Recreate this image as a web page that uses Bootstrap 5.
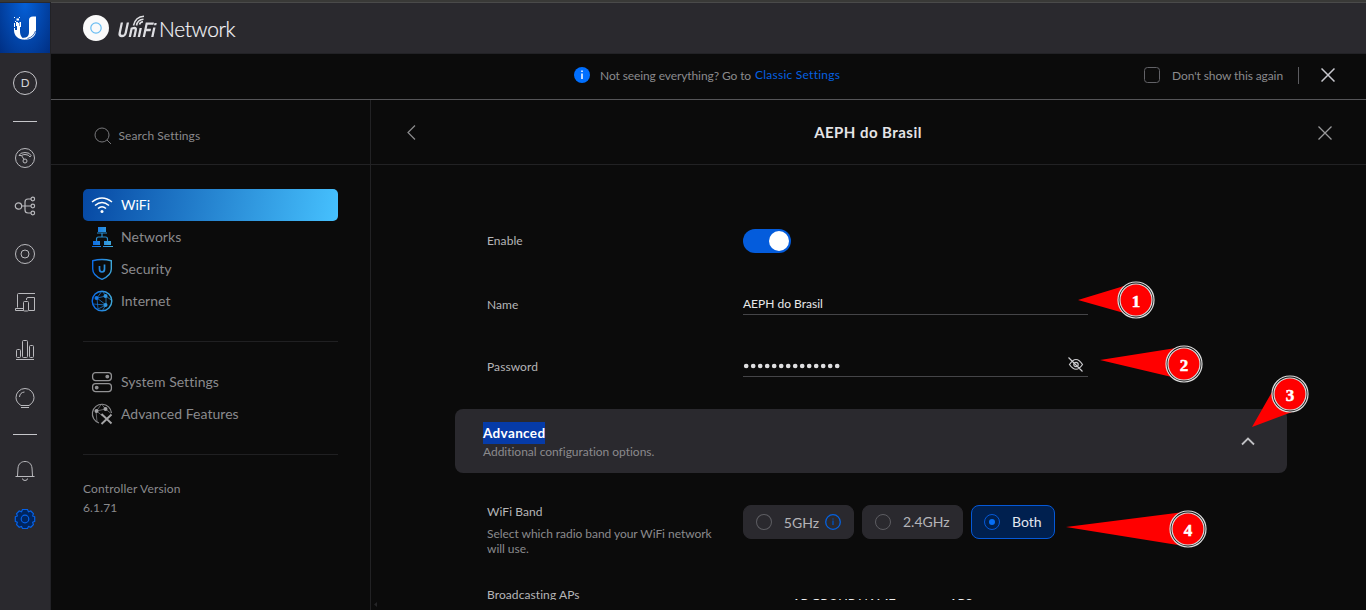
<!DOCTYPE html>
<html lang="en" data-bs-theme="dark">
<head>
<meta charset="utf-8">
<meta name="viewport" content="width=device-width, initial-scale=1">
<title>UniFi Network</title>
<link href="https://cdn.jsdelivr.net/npm/bootstrap@5.3.0/dist/css/bootstrap.min.css" rel="stylesheet">
<style>
body{font-family:Lato,"Liberation Sans",sans-serif;font-size:12px;line-height:16px;background:#0b0b0b;color:#b4b4b4;height:610px;overflow:hidden;border-top:2px solid #393937}
svg{display:block;flex:none}
.app{height:608px}
.rail{width:51px;background:#2a292e;border-right:1px solid #222226;padding-top:1px}
.brandbox{width:50px;height:50px;background:radial-gradient(ellipse at 50% 0,#0560d8,#002f83)}
.rail-icons{color:#b9b9bd}
.rail-icons a{height:48px;width:50px;color:inherit}
.avatar{width:24px;height:24px;border:1px solid #c6c6ca;font-size:11.5px;color:#d4d4d8;line-height:22px}
.dash{width:24px;height:1px;background:#c6c6ca}
.topbar{height:52px;background:#2a292e;border-top:1px solid #4a4a4a;border-bottom:1px solid #222226;padding-left:32px}
.product{font-size:21px;font-weight:300;color:#f4f4f8;line-height:26px;letter-spacing:-.35px;-webkit-text-stroke:.2px #f4f4f8}
.notice{height:46px;border-bottom:1px solid #555558;color:#8a8a8d}
.notice a{color:#0560e0}
.note,.dont{letter-spacing:-.1px}
.classic{letter-spacing:.24px}
.side{width:320px;border-right:1px solid #222224;color:#8a8a8d}
.search{height:65px;border-bottom:1px solid #222224;padding:8px 0 0 43px}
.srch{letter-spacing:.06px}
.menu{margin:0 32px;width:255px}
.menu .nav-link{height:32px;padding:0 0 0 8px;font-size:14px;letter-spacing:.04px;color:#8a8a8d;border-radius:5px;gap:8px}
.menu .nav-link.active{background:linear-gradient(100deg,#0648a3,#46c1fe);color:#fff}
.split{height:1px;background:#202022;margin:0 32px;width:255px}
.titlebar{height:65px;border-bottom:1px solid #222224}
.titlebar h1{font-size:15px;line-height:20px;font-weight:700;letter-spacing:.46px;color:#e4e4e6}
.pane{height:435px;overflow:hidden}
.cfg{padding-left:116px}
.lbl{width:256px;color:#b6b6b8;letter-spacing:.08px}
.field{width:345px;border-bottom:1px solid #454548;color:#e8e8ea}
.switch-on{width:48px;height:24px;background:#045cdc;padding:2px}
.switch-on i{width:20px;height:20px;background:#fff}
.adv{margin-left:84px;width:832px;height:64px;background:#2a292e;border-radius:8px;padding:12px 32px 0 28px}
.adv b{background:#063ba8;color:#fff;font-size:13.5px;letter-spacing:.36px;line-height:22px;display:inline-block}
.opt{height:34px;border-radius:8px;background:#2a292e;border:1px solid #2a292e;font-size:14px;color:#b4b4b8;padding:0 12px}
.opt.sel{background:#00204f;border-color:#0559d8;color:#e4e8f0}
.ring{width:16px;height:16px;border:1px solid #5d5d62}
.sel .ring{border-color:#0559d8}
.ring i{width:6px;height:6px;background:#066ef5}
.muted{color:#8a8a8d;line-height:15px;letter-spacing:-.04px}
.foot{height:10px}
.marks{left:0;top:0;pointer-events:none}
</style>
</head>
<body>
<div class="app d-flex">
  <aside class="rail flex-shrink-0">
    <div class="brandbox d-flex align-items-center justify-content-center">
      <svg width="24" height="26" viewBox="0 0 24 26" fill="#fff"><path d="M7 11v5c0 5 2 7.500 6 8.500C6 25 1 21.500 1 15v-2h1v2h2v-4h1V8h1v3z"/><path d="M16 5q0-3.500 4-3.500h3V15c0 6-4 9-9 9.500q-3 .5-5-1.500c6 0 7-3 7-6z"/><path d="M1 2h1v1H1zM3.500 3.500H6v2H3.500zM2 6h1v1H2zM6.500 7H8v5H6.500zM3 7h2v4H3zM6 2h1v1H6zM1 8h1v4H1z"/><path d="M22.500 16q-2 6-8 7.500" fill="none" stroke="#0645a5" stroke-width=".8"/></svg>
    </div>
    <nav class="rail-icons d-flex flex-column align-items-center">
      <div class="avatar rounded-circle text-center" style="margin-top:18px">D</div>
      <div class="dash" style="margin:26px 0 12px"></div>
      <a class="d-flex align-items-center justify-content-center" href="#"><svg width="22" height="22" viewBox="0 0 22 22" fill="none" stroke="currentColor"><circle cx="11" cy="11" r="9.500"/><path d="M5 8.500q1-3 6-3t6 3l-1 1.500q-1-2.500-5-2.500-2 0-3.500 1zM7.500 8.500l2.500 4"/><circle cx="11" cy="14" r="2"/></svg></a>
      <a class="d-flex align-items-center justify-content-center" href="#"><svg width="22" height="22" viewBox="0 0 22 22" fill="none" stroke="currentColor" stroke-width="1.200"><circle cx="4.500" cy="11" r="3.200"/><path d="M8 11h9M17 4h-3q-3 0-3 3v8q0 3 3 3h3"/><circle cx="18.800" cy="4" r="1.800"/><circle cx="18.800" cy="11" r="1.800"/><circle cx="18.800" cy="18" r="1.800"/></svg></a>
      <a class="d-flex align-items-center justify-content-center" href="#"><svg width="22" height="22" viewBox="0 0 22 22" fill="none" stroke="currentColor"><circle cx="11" cy="11" r="9.500"/><circle cx="11" cy="11" r="4"/></svg></a>
      <a class="d-flex align-items-center justify-content-center" href="#"><svg width="22" height="22" viewBox="0 0 22 22" fill="none" stroke="currentColor"><path d="M21 2.500H4.500q-1 0-1 1v13M1.500 17.500h8v2h-8zM12.500 9V8q0-1.500 1.500-1.500h6.500v13H15"/><path d="M9.500 19.500v-8q0-1 1-1h3q1 0 1 1v8q0 .5-1 .5h-3q-1 0-1-.5z"/></svg></a>
      <a class="d-flex align-items-center justify-content-center" href="#"><svg width="22" height="22" viewBox="0 0 22 22" fill="none" stroke="currentColor"><rect x="2.500" y="10.500" width="4" height="8" rx="1"/><rect x="8.500" y="1.500" width="5" height="17" rx="1"/><rect x="15.500" y="6.500" width="4" height="12" rx="1"/><path d="M2 20.500h18"/></svg></a>
      <a class="d-flex align-items-center justify-content-center" href="#"><svg width="22" height="22" viewBox="0 0 22 22" fill="none" stroke="currentColor"><path d="M7 18.500C4 16.500 2 14 2 10.500a9 9 0 0 1 18 0c0 3.500-2 6-5 8zM7 20.500h8M5.500 10a5.500 5.500 0 0 1 5-5"/></svg></a>
      <div class="dash" style="margin:12px 0"></div>
      <a class="d-flex align-items-center justify-content-center" href="#"><svg width="22" height="22" viewBox="0 0 22 22" fill="none" stroke="currentColor"><path d="M1.500 16.500h19M3.500 16l.5-8c.5-4.500 3.500-6.500 7-6.500s6.500 2 7 6.500l.5 8M8.500 18.500q0 2 2.500 2t2.500-2"/></svg></a>
      <a class="d-flex align-items-center justify-content-center" href="#"><svg width="22" height="22" viewBox="0 0 22 22" fill="#00255f" stroke="#0562e8" stroke-width="1.200"><path d="M8.500 1.500h5l1 2.200 2.300-.7 2.600 2.600-.7 2.300 2 .9v4.600l-2 .9.700 2.300-2.600 2.600-2.300-.7-1 2h-5l-1-2-2.300.7-2.600-2.600.7-2.300-2-.9V8.800l2-.9-.7-2.300L5.200 3l2.300.7z"/><circle cx="11" cy="11" r="3.800"/></svg></a>
    </nav>
  </aside>
  <div class="flex-grow-1 d-flex flex-column">
    <header class="topbar d-flex align-items-center">
      <svg width="26" height="26" viewBox="0 0 26 26"><circle cx="13" cy="13" r="13" fill="#fafafa"/><circle cx="13" cy="13" r="5.200" fill="none" stroke="#69bdf2" stroke-width="1.200"/></svg>
      <svg width="40" height="26" viewBox="0 0 40 26" style="margin-left:8px"><g fill="none" stroke="#dedee2"><g transform="translate(.5) skewX(-12)" stroke-width="2.300"><path d="M6 7.500V18q0 3 3 3t3-3V7.500M17 22v-8.500q4.500-1.500 4.500 1.500v7M26 13v9M31 22V8.600h7M31 15h5.500M39.500 12.500V22M39.800 8v2.200"/></g><path d="M16.500 10.500Q18.500 1.500 27 1.200M19.500 10.500q1-6 7-6.300M22.500 9.500q.5-2.500 3.500-2.800" stroke-width="1.600"/></g></svg>
      <span class="product" style="margin:1px 0 0 2px">Network</span>
    </header>
    <div class="notice d-flex align-items-center">
      <svg width="16" height="16" viewBox="0 0 16 16" style="margin-left:523px;margin-top:-3px"><circle cx="8" cy="8" r="8" fill="#006fff"/><path d="M8 6.500V12M8 3.500V5" stroke="#fff" stroke-width="1.500"/></svg>
      <span class="note" style="margin:-1px 0 0 10px">Not seeing everything? Go to</span><a href="#" class="text-decoration-none classic" style="margin:-3px 0 0 4px">Classic Settings</a>
      <div class="ms-auto d-flex align-items-center" style="padding-right:31px;margin-top:-3px">
        <svg width="16" height="16" viewBox="0 0 16 16"><rect x=".5" y=".5" width="15" height="15" rx="3" fill="none" stroke="#626267"/></svg>
        <span class="dont" style="margin:2px 0 0 12px">Don't show this again</span>
        <span style="width:1px;height:17px;margin:0 22px 0 15px;background:#5c5c60"></span>
        <svg width="14" height="14" viewBox="0 0 14 14" stroke="#c8c8ce" stroke-width="1.500"><path d="M.5.5l13 13M13.500.5l-13 13"/></svg>
      </div>
    </div>
    <div class="d-flex flex-grow-1">
      <div class="side flex-shrink-0">
        <div class="search d-flex align-items-center"><svg width="18" height="18" viewBox="0 0 18 18" fill="none" stroke="#77777a"><circle cx="8" cy="8" r="7"/><path d="M13 13l4 4"/></svg><span class="srch" style="margin-left:6.5px">Search Settings</span></div>
        <nav class="menu nav flex-column" style="padding-top:24px">
          <a class="nav-link active d-flex align-items-center" href="#"><svg width="22" height="22" viewBox="0 0 22 22" fill="none" stroke="#fff" stroke-width="1.500"><path d="M1 8q10-8 20 0M4 11.500q7-6 14 0M7 14.500q4-3.500 8 0"/><circle cx="11" cy="17.500" r="1.500" fill="#fff" stroke="none"/></svg>WiFi</a>
          <a class="nav-link d-flex align-items-center" href="#"><svg width="22" height="22" viewBox="0 0 22 22"><defs><linearGradient id="bl" gradientUnits="userSpaceOnUse" x1="0" x2="22" y1="0" y2="0"><stop stop-color="#0767e8"/><stop offset="1" stop-color="#42abd8"/></linearGradient></defs><path fill="url(#bl)" d="M7 1h8v5H7zM2 15h7v4H2zM13 15h7v4h-7zM1 20h9v1H1zM12 20h10v1H12z"/><path d="M6 7h10M11 7v4M5.500 15v-2q0-2 2-2h7q2 0 2 2v2" fill="none" stroke="#278acb" stroke-width="1.200"/></svg>Networks</a>
          <a class="nav-link d-flex align-items-center" href="#"><svg width="22" height="22" viewBox="0 0 22 22" fill="none" stroke="url(#bl)" stroke-width="1.400"><path d="M1.700 2.700Q11 .2 20.300 2.700V11q0 6.500-9.300 10.300Q1.700 17.500 1.700 11z"/><path d="M8.500 8v3q0 3 2.500 3t2.500-3V6.500" stroke-width="1.700"/></svg>Security</a>
          <a class="nav-link d-flex align-items-center" href="#"><svg width="22" height="22" viewBox="0 0 22 22" fill="none" stroke="url(#bl)"><circle cx="11" cy="11" r="9.800" stroke-width="1.400"/><path d="M6 8l9-2-4-5-5 7 9 7V6l5 4M2 14l13 1-4 6M6 8l1 11M7 19l8-4" stroke-width=".7"/><g fill="url(#bl)" stroke="none"><circle cx="5.500" cy="8" r="2"/><circle cx="14.500" cy="6" r="2"/><circle cx="14.500" cy="15" r="2"/></g></svg>Internet</a>
        </nav>
        <div class="split" style="margin-top:24px"></div>
        <nav class="menu nav flex-column" style="padding-top:24px">
          <a class="nav-link d-flex align-items-center" href="#"><svg width="22" height="22" viewBox="0 0 22 22" fill="none" stroke="#929294" stroke-width="1.300"><rect x="1.600" y="1.600" width="18.800" height="8" rx="3"/><rect x="1.600" y="12.600" width="18.800" height="8" rx="3"/><circle cx="16.300" cy="5.600" r="1.300" fill="#929294"/><circle cx="5.700" cy="16.600" r="1.300" fill="#929294"/></svg>System Settings</a>
          <a class="nav-link d-flex align-items-center" href="#"><svg width="22" height="22" viewBox="0 0 22 22" fill="none" stroke="#8a8a8c"><path d="M8 20A9.600 9.600 0 1 1 20.500 10" stroke-width="1.200"/><path d="M5.500 8l9-2-4-5-5 7 6 5M5 8l1 11M14.500 6l5 4" stroke-width=".7"/><g fill="#a5a5a7" stroke="none"><circle cx="5.500" cy="8" r="2"/><circle cx="14.500" cy="6" r="2"/></g><path d="M10.500 11l10 9.500M20.500 11.500l-10 9.500" stroke-width="1.900" stroke="#a5a5a7"/></svg>Advanced Features</a>
        </nav>
        <div class="split" style="margin-top:24px"></div>
        <div style="margin:24px 0 0 32px;line-height:19px;letter-spacing:.16px"><div>Controller Version</div><div>6.1.71</div></div>
      </div>
      <main class="flex-grow-1">
        <div class="titlebar d-flex align-items-center justify-content-between" style="padding:1px 34px 0 35px">
          <svg width="10" height="16" viewBox="0 0 10 16" fill="none" stroke="#8c8c8e" stroke-width="1.200" style="margin-top:-2px"><path d="M9 1.500L2 8.500l7 7"/></svg>
          <h1 style="margin:-1px 0 0 2px">AEPH do Brasil</h1>
          <svg width="14" height="14" viewBox="0 0 14 14" stroke="#99999b" stroke-width="1.300" style="margin-top:1px"><path d="M.5.5l13 13M13.500.5l-13 13"/></svg>
        </div>
        <div class="pane">
          <div class="cfg d-flex align-items-center" style="padding-top:64px"><div class="lbl">Enable</div><div class="switch-on rounded-pill d-flex justify-content-end"><i class="rounded-circle"></i></div></div>
          <div class="cfg d-flex" style="margin-top:44px"><div class="lbl">Name</div><div class="field" style="height:19px;margin-top:-1px"><span>AEPH do Brasil</span></div></div>
          <div class="cfg d-flex" style="margin-top:44px"><div class="lbl">Password</div><div class="field d-flex justify-content-between" style="height:21px;margin-top:-3px">
            <svg width="98" height="16" viewBox="0 0 98 16"><path d="M3.200 10h91.200" fill="none" stroke="#dedee0" stroke-width="4.700" stroke-linecap="round" stroke-dasharray="0 7"/></svg>
            <svg width="18" height="16" viewBox="0 0 18 16" fill="none" stroke="#cdcdd0" stroke-width="1.200" style="margin:0 3px 0 0"><path d="M2.500 8.500q6.500-10 13 0-6.500 9.500-13 0zM1.500 1.500l14 14"/><circle cx="9" cy="8.500" r="2.200"/></svg></div></div>
          <div class="adv d-flex justify-content-between" style="margin-top:32px"><div><b style="margin-top:1px">Advanced</b><div style="margin-top:1px;color:#8a8a8d;line-height:14px;letter-spacing:-.02px">Additional configuration options.</div></div><svg width="14" height="10" viewBox="0 0 14 10" fill="none" stroke="#c0c0c4" stroke-width="1.800" style="margin-top:15px"><path d="M1 8.500l6-6 6 6"/></svg></div>
          <div class="cfg d-flex" style="margin-top:31px;height:83px">
            <div class="lbl"><div>WiFi Band</div><div class="muted" style="margin-top:6px;width:240px">Select which radio band your WiFi network<br>will use.</div></div>
            <div class="d-flex" style="gap:8px;margin-top:1px">
              <div class="opt d-flex align-items-center" style="width:111px"><span class="ring rounded-circle"></span><span style="margin:2px 0 0 12px">5GHz</span><svg width="16" height="16" viewBox="0 0 16 16" fill="none" stroke="#0562e0" style="margin-left:6px"><circle cx="8" cy="8" r="7.300" stroke-width="1.300"/><path d="M8 6.500V11M8 4.500v1" stroke="#064dae" stroke-width="1.500"/></svg></div>
              <div class="opt d-flex align-items-center" style="width:101px"><span class="ring rounded-circle"></span><span style="margin-left:12px">2.4GHz</span></div>
              <div class="opt sel d-flex align-items-center" style="width:84px"><span class="ring rounded-circle d-flex align-items-center justify-content-center"><i class="rounded-circle"></i></span><span style="margin-left:12px">Both</span></div>
            </div>
          </div>
          <div class="cfg d-flex"><div class="lbl">Broadcasting APs</div><div class="d-flex" style="padding:9px 0 0 49px;color:#f0f0f0;font-size:13px;letter-spacing:-.2px"><span style="width:157px">AP GROUP NAME</span><span>APS</span></div></div>
        </div>
        <div class="foot"><svg width="10" height="8" viewBox="0 0 10 8"><path d="M6 2v5L3 4.500z" fill="#252527"/></svg></div>
      </main>
    </div>
  </div>
</div>
<!-- numbered callouts floating over the page -->
<svg class="marks position-absolute" width="1366" height="610" viewBox="0 0 1366 610">
  <g fill="#f00"><path d="M1078 300l46-14v27zM1100 360l76-12v30zM1252 427l20-35 20 20zM1066 527l118-15v34z"/></g>
  <g fill="#f00" stroke="#ddd" stroke-width="1.200">
    <g fill="#111"><circle cx="1136" cy="300" r="18"/><circle cx="1184" cy="364" r="18"/><circle cx="1290" cy="394" r="18"/><circle cx="1188" cy="529" r="18"/></g>
    <circle cx="1136" cy="300" r="16"/><circle cx="1184" cy="364" r="16"/><circle cx="1290" cy="394" r="16"/><circle cx="1188" cy="529" r="16"/></g>
  <g fill="#fff" stroke="#fff" stroke-width=".5" font-family="'Liberation Serif',serif" font-weight="700" font-size="17" text-anchor="middle"><text x="1136" y="307">1</text><text x="1184" y="371">2</text><text x="1290" y="401">3</text><text x="1188" y="536">4</text></g>
</svg>
<script src="https://cdn.jsdelivr.net/npm/bootstrap@5.3.0/dist/js/bootstrap.bundle.min.js"></script>
</body>
</html>
